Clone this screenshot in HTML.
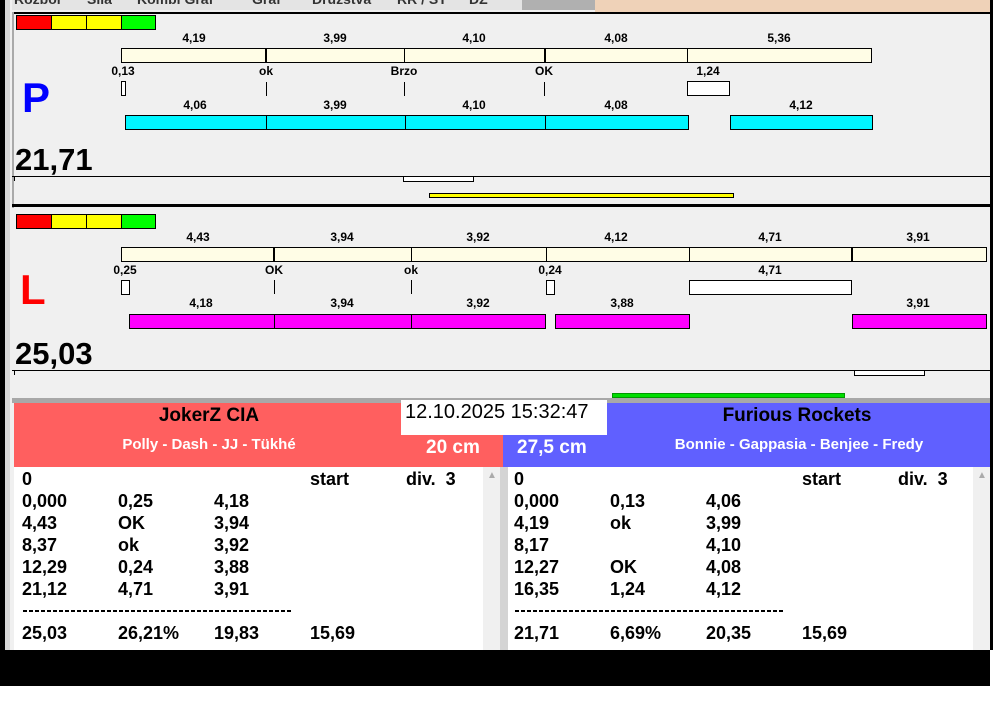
<!DOCTYPE html>
<html><head><meta charset="utf-8"><style>
*{margin:0;padding:0;box-sizing:border-box}
body{width:995px;height:716px;position:relative;background:#fff;font-family:"Liberation Sans",Arial,sans-serif;overflow:hidden}
div{position:absolute}
.t{font-weight:bold;font-size:12px;color:#000;white-space:nowrap;transform:translateX(-50%)}
.cr{background:#fffde6;border:1px solid #000}
.cy{background:#00f6ff;border:1px solid #000}
.mg{background:#ff00ff;border:1px solid #000}
.wb{background:#fff;border:1px solid #000}
.vl{width:2px;background:#000}
.tk{width:1px;background:#000}
.r{font-weight:bold;font-size:18px;white-space:nowrap}
.dash{height:2px;background:repeating-linear-gradient(90deg,#000 0 4px,transparent 4px 6px)}
</style></head><body>
<!-- frame -->
<div style="left:0;top:0;width:990px;height:686px;background:#000"></div>
<div style="left:990px;top:0;width:3px;height:650px;background:#000"></div>
<div style="left:5px;top:0;width:985px;height:650px;background:#d8d8d8"></div>
<div style="left:10px;top:0;width:980px;height:650px;background:#f0f0f0"></div>
<!-- tabs -->
<div style="left:12px;top:0;width:583px;height:10px;background:#e4e4e4"></div>
<div style="left:595px;top:0;width:395px;height:12px;background:#efd2b8"></div>
<div style="left:522px;top:0;width:73px;height:10px;background:#b0b0b0"></div>
<div style="left:12px;top:0;width:500px;height:10px;overflow:hidden;font-size:14px;font-weight:bold;color:#333">
<span style="position:absolute;left:2px;top:-9px">Rozbor</span><span style="position:absolute;left:75px;top:-9px">Síla</span><span style="position:absolute;left:125px;top:-9px">Kombi Graf</span><span style="position:absolute;left:240px;top:-9px">Graf</span><span style="position:absolute;left:300px;top:-9px">Družstva</span><span style="position:absolute;left:385px;top:-9px">RR / ST</span><span style="position:absolute;left:457px;top:-9px">DZ</span></div>
<!-- panel 1 -->
<div style="left:12px;top:12px;width:978px;height:2px;background:#000"></div>
<div style="left:12px;top:12px;width:2px;height:196px;background:#aaa"></div>
<div style="left:16px;top:15px;width:36px;height:15px;background:#f00;border:1px solid #000"></div>
<div style="left:51px;top:15px;width:36px;height:15px;background:#ff0;border:1px solid #000"></div>
<div style="left:86px;top:15px;width:36px;height:15px;background:#ff0;border:1px solid #000"></div>
<div style="left:121px;top:15px;width:35px;height:15px;background:#0f0;border:1px solid #000"></div>
<div class="t" style="left:194px;top:31px">4,19</div><div class="t" style="left:335px;top:31px">3,99</div><div class="t" style="left:474px;top:31px">4,10</div><div class="t" style="left:616px;top:31px">4,08</div><div class="t" style="left:779px;top:31px">5,36</div>
<div class="cr" style="left:121px;top:48px;width:751px;height:15px"></div>
<div class="vl" style="left:265px;top:48px;height:15px"></div><div class="tk" style="left:404px;top:48px;height:15px"></div><div class="vl" style="left:544px;top:48px;height:15px"></div><div class="tk" style="left:687px;top:48px;height:15px"></div>
<div class="t" style="left:123px;top:64px">0,13</div><div class="t" style="left:266px;top:64px">ok</div><div class="t" style="left:404px;top:64px">Brzo</div><div class="t" style="left:544px;top:64px">OK</div><div class="t" style="left:708px;top:64px">1,24</div>
<div class="wb" style="left:121px;top:81px;width:5px;height:15px"></div>
<div class="tk" style="left:266px;top:82px;height:14px"></div><div class="tk" style="left:404px;top:82px;height:14px"></div><div class="tk" style="left:544px;top:82px;height:14px"></div>
<div class="wb" style="left:687px;top:81px;width:43px;height:15px"></div>
<div style="left:22px;top:74px;font-size:42px;font-weight:bold;color:#00f">P</div>
<div class="t" style="left:195px;top:98px">4,06</div><div class="t" style="left:335px;top:98px">3,99</div><div class="t" style="left:474px;top:98px">4,10</div><div class="t" style="left:616px;top:98px">4,08</div><div class="t" style="left:801px;top:98px">4,12</div>
<div class="cy" style="left:125px;top:115px;width:564px;height:15px"></div>
<div class="tk" style="left:266px;top:115px;height:15px"></div><div class="tk" style="left:405px;top:115px;height:15px"></div><div class="tk" style="left:545px;top:115px;height:15px"></div>
<div class="cy" style="left:730px;top:115px;width:143px;height:15px"></div>
<div style="left:15px;top:142px;font-size:31px;font-weight:bold">21,71</div>
<div style="left:12px;top:176px;width:978px;height:1px;background:#000"></div>
<div style="left:14px;top:176px;width:1px;height:5px;background:#000"></div>
<div class="wb" style="left:403px;top:176px;width:71px;height:6px"></div>
<div style="left:429px;top:193px;width:305px;height:5px;background:#ff0;border:1px solid #000"></div>
<div style="left:12px;top:204px;width:978px;height:3px;background:#000"></div>
<!-- panel 2 -->
<div style="left:16px;top:214px;width:36px;height:15px;background:#f00;border:1px solid #000"></div>
<div style="left:51px;top:214px;width:36px;height:15px;background:#ff0;border:1px solid #000"></div>
<div style="left:86px;top:214px;width:36px;height:15px;background:#ff0;border:1px solid #000"></div>
<div style="left:121px;top:214px;width:35px;height:15px;background:#0f0;border:1px solid #000"></div>
<div class="t" style="left:198px;top:230px">4,43</div><div class="t" style="left:342px;top:230px">3,94</div><div class="t" style="left:478px;top:230px">3,92</div><div class="t" style="left:616px;top:230px">4,12</div><div class="t" style="left:770px;top:230px">4,71</div><div class="t" style="left:918px;top:230px">3,91</div>
<div class="cr" style="left:121px;top:247px;width:866px;height:15px"></div>
<div class="vl" style="left:273px;top:247px;height:15px"></div><div class="tk" style="left:411px;top:247px;height:15px"></div><div class="tk" style="left:546px;top:247px;height:15px"></div><div class="tk" style="left:689px;top:247px;height:15px"></div><div class="vl" style="left:851px;top:247px;height:15px"></div>
<div class="t" style="left:125px;top:263px">0,25</div><div class="t" style="left:274px;top:263px">OK</div><div class="t" style="left:411px;top:263px">ok</div><div class="t" style="left:550px;top:263px">0,24</div><div class="t" style="left:770px;top:263px">4,71</div>
<div class="wb" style="left:121px;top:280px;width:9px;height:15px"></div>
<div class="tk" style="left:274px;top:280px;height:14px"></div><div class="tk" style="left:411px;top:280px;height:14px"></div>
<div class="wb" style="left:546px;top:280px;width:9px;height:15px"></div>
<div class="wb" style="left:689px;top:280px;width:163px;height:15px"></div>
<div style="left:20px;top:266px;font-size:42px;font-weight:bold;color:#f00">L</div>
<div class="t" style="left:201px;top:296px">4,18</div><div class="t" style="left:342px;top:296px">3,94</div><div class="t" style="left:478px;top:296px">3,92</div><div class="t" style="left:622px;top:296px">3,88</div><div class="t" style="left:918px;top:296px">3,91</div>
<div class="mg" style="left:129px;top:314px;width:417px;height:15px"></div>
<div class="tk" style="left:274px;top:314px;height:15px"></div><div class="tk" style="left:411px;top:314px;height:15px"></div>
<div class="mg" style="left:555px;top:314px;width:135px;height:15px"></div>
<div class="mg" style="left:852px;top:314px;width:135px;height:15px"></div>
<div style="left:15px;top:336px;font-size:31px;font-weight:bold">25,03</div>
<div style="left:12px;top:370px;width:978px;height:1px;background:#000"></div>
<div style="left:14px;top:370px;width:1px;height:5px;background:#000"></div>
<div class="wb" style="left:854px;top:370px;width:71px;height:6px"></div>
<div style="left:612px;top:393px;width:233px;height:5px;background:#0d0;border:1px solid #090"></div>
<div style="left:12px;top:398px;width:978px;height:5px;background:#a8a8a8"></div>
<!-- bottom -->
<div style="left:14px;top:403px;width:489px;height:64px;background:#ff5f5f"></div>
<div style="left:503px;top:403px;width:487px;height:64px;background:#6060ff"></div>
<div style="left:401px;top:400px;width:206px;height:35px;background:#fff"></div>
<div style="left:405px;top:401px;font-size:20px;color:#000">12.10.2025 15:32:47</div>
<div style="left:209px;top:405px;font-size:19px;font-weight:bold;transform:translateX(-50%)">JokerZ CIA</div>
<div style="left:797px;top:405px;font-size:19px;font-weight:bold;transform:translateX(-50%)">Furious Rockets</div>
<div style="left:209px;top:436px;font-size:15px;font-weight:bold;color:#fff;transform:translateX(-50%);white-space:nowrap">Polly - Dash - JJ - Tükhé</div>
<div style="left:799px;top:436px;font-size:15px;font-weight:bold;color:#fff;transform:translateX(-50%);white-space:nowrap">Bonnie - Gappasia - Benjee - Fredy</div>
<div style="left:426px;top:437px;font-size:19px;font-weight:bold;color:#fff">20 cm</div>
<div style="left:517px;top:437px;font-size:19px;font-weight:bold;color:#fff">27,5 cm</div>
<div style="left:14px;top:467px;width:486px;height:183px;background:#fff"></div>
<div style="left:483px;top:467px;width:17px;height:183px;background:#f0f0f0"></div>
<div style="left:487px;top:470px;font-size:10px;color:#aaa">▲</div>
<div style="left:500px;top:467px;width:8px;height:183px;background:#d4d4d4"></div>
<div style="left:508px;top:467px;width:482px;height:183px;background:#fff"></div>
<div style="left:973px;top:467px;width:17px;height:183px;background:#f0f0f0"></div>
<div style="left:977px;top:470px;font-size:10px;color:#aaa">▲</div>
<div style="left:0;top:650px;width:990px;height:36px;background:#000"></div>

<div class="r" style="left:22px;top:469px">0</div><div class="r" style="left:310px;top:469px">start</div><div class="r" style="left:406px;top:469px">div.&nbsp; 3</div>
<div class="r" style="left:22px;top:491px">0,000</div><div class="r" style="left:118px;top:491px">0,25</div><div class="r" style="left:214px;top:491px">4,18</div>
<div class="r" style="left:22px;top:513px">4,43</div><div class="r" style="left:118px;top:513px">OK</div><div class="r" style="left:214px;top:513px">3,94</div>
<div class="r" style="left:22px;top:535px">8,37</div><div class="r" style="left:118px;top:535px">ok</div><div class="r" style="left:214px;top:535px">3,92</div>
<div class="r" style="left:22px;top:557px">12,29</div><div class="r" style="left:118px;top:557px">0,24</div><div class="r" style="left:214px;top:557px">3,88</div>
<div class="r" style="left:22px;top:579px">21,12</div><div class="r" style="left:118px;top:579px">4,71</div><div class="r" style="left:214px;top:579px">3,91</div>
<div class="dash" style="left:23px;top:610px;width:270px"></div>
<div class="r" style="left:22px;top:623px">25,03</div><div class="r" style="left:118px;top:623px">26,21%</div><div class="r" style="left:214px;top:623px">19,83</div><div class="r" style="left:310px;top:623px">15,69</div>

<div class="r" style="left:514px;top:469px">0</div><div class="r" style="left:802px;top:469px">start</div><div class="r" style="left:898px;top:469px">div.&nbsp; 3</div>
<div class="r" style="left:514px;top:491px">0,000</div><div class="r" style="left:610px;top:491px">0,13</div><div class="r" style="left:706px;top:491px">4,06</div>
<div class="r" style="left:514px;top:513px">4,19</div><div class="r" style="left:610px;top:513px">ok</div><div class="r" style="left:706px;top:513px">3,99</div>
<div class="r" style="left:514px;top:535px">8,17</div><div class="r" style="left:706px;top:535px">4,10</div>
<div class="r" style="left:514px;top:557px">12,27</div><div class="r" style="left:610px;top:557px">OK</div><div class="r" style="left:706px;top:557px">4,08</div>
<div class="r" style="left:514px;top:579px">16,35</div><div class="r" style="left:610px;top:579px">1,24</div><div class="r" style="left:706px;top:579px">4,12</div>
<div class="dash" style="left:515px;top:610px;width:270px"></div>
<div class="r" style="left:514px;top:623px">21,71</div><div class="r" style="left:610px;top:623px">6,69%</div><div class="r" style="left:706px;top:623px">20,35</div><div class="r" style="left:802px;top:623px">15,69</div>
</body></html>
